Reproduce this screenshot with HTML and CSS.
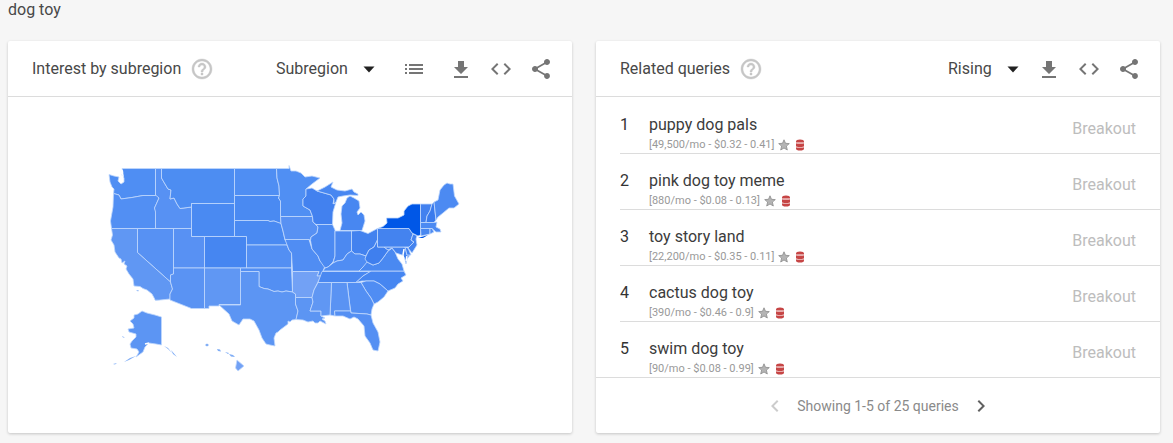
FILE: index.html
```html
<!DOCTYPE html>
<html lang="en">
<head>
<meta charset="utf-8">
<title>dog toy</title>
<link rel="stylesheet" href="styles.css">
</head>
<body>
<svg class="sprite" aria-hidden="true">
  <symbol id="help" viewBox="0 0 24 24"><path d="M11 18h2v-2h-2v2zm1-16C6.48 2 2 6.48 2 12s4.480 10 10 10 10-4.480 10-10S17.520 2 12 2zm0 18c-4.410 0-8-3.590-8-8s3.590-8 8-8 8 3.590 8 8-3.590 8-8 8zm0-14c-2.210 0-4 1.790-4 4h2c0-1.100.9-2 2-2s2 .9 2 2c0 2-3 1.750-3 5h2c0-2.250 3-2.500 3-5 0-2.210-1.790-4-4-4z"/></symbol>
  <symbol id="arrow" viewBox="0 0 24 24"><path d="M6.500 9.500h11L12 15.500z"/></symbol>
  <symbol id="list" viewBox="0 0 24 24"><path d="M3 7h2v2H3zM3 11h2v2H3zM3 15h2v2H3zM7 7h14v2H7zM7 11h14v2H7zM7 15h14v2H7z"/></symbol>
  <symbol id="download" viewBox="0 0 24 24"><path d="M19 10h-4V4H9v6H5l7 7 7-7zM5 19v2h14v-2z"/></symbol>
  <symbol id="embed" viewBox="0 0 24 24"><path d="M9.400 16.600L4.800 12l4.600-4.600L8 6l-6 6 6 6 1.400-1.400zm5.200 0l4.600-4.600-4.600-4.600L16 6l6 6-6 6-1.400-1.400z"/></symbol>
  <symbol id="share" viewBox="0 0 24 24"><path d="M18 16.080c-.76 0-1.440.3-1.960.77L8.910 12.700c.05-.23.09-.46.09-.7s-.04-.47-.09-.7l7.050-4.110c.54.5 1.250.81 2.040.81 1.660 0 3-1.340 3-3s-1.340-3-3-3-3 1.340-3 3c0 .24.04.47.09.7L8.040 9.810C7.500 9.310 6.790 9 6 9c-1.660 0-3 1.340-3 3s1.340 3 3 3c.79 0 1.500-.31 2.040-.81l7.120 4.160c-.05.21-.08.43-.08.65 0 1.610 1.310 2.920 2.920 2.920s2.920-1.310 2.920-2.920-1.310-2.920-2.920-2.920z"/></symbol>
  <symbol id="prev" viewBox="0 0 24 24"><path d="M15.410 7.410L14 6l-6 6 6 6 1.410-1.410L10.830 12z"/></symbol>
  <symbol id="next" viewBox="0 0 24 24"><path d="M8.590 7.410L10 6l6 6-6 6-1.410-1.410L13.170 12z"/></symbol>
  <symbol id="star" viewBox="0 0 12 12"><path fill="#b4b4b4" stroke="#8c8c8c" stroke-width=".8" d="M6 .8l1.500 3.500 3.800.3-2.900 2.500.9 3.900L6 9l-3.300 2 .9-3.900L.7 4.600l3.800-.3z"/></symbol>
  <symbol id="database" viewBox="0 0 12 12"><path fill="#c64545" d="M2 2.500Q2 .5 6 .5t4 2V3.500H2zM2 4.200q4 1 8 0V7.500q-4 1-8 0zM2 8.300q4 1 8 0V9.500q0 2-4 2t-4-2z"/><path fill="#e3a0a0" d="M2 3.200h8v1q-4 1-8 0zM2 7.500q4 1 8 0v.8q-4 1-8 0z"/></symbol>
</svg>

<h1 class="term">dog toy</h1>
<main class="widgets">
  <section class="card">
    <header class="card-header">
      <h2 class="card-title">Interest by subregion</h2>
      <button class="help" aria-label="Help"><svg class="icon"><use href="#help"/></svg></button>
      <div class="picker"><select class="picker-select" aria-label="Resolution"><option>Subregion</option></select><svg class="icon picker-arrow"><use href="#arrow"/></svg></div>
      <button class="tool tool-list" aria-label="Show as list"><svg class="icon"><use href="#list"/></svg></button>
      <button class="tool" aria-label="Download"><svg class="icon"><use href="#download"/></svg></button>
      <button class="tool" aria-label="Embed"><svg class="icon"><use href="#embed"/></svg></button>
      <button class="tool" aria-label="Share"><svg class="icon"><use href="#share"/></svg></button>
    </header>
    <div class="map-area">
      <svg class="map" viewBox="8 97 564 336" role="img" aria-label="Interest in the United States by state">
        <g class="states">
          <path fill="#4f8ef3" d="M122 168.500H155.500V195.500L143 195.500 132 197.500 121 199 119 195 113.500 193.500 114 189 112 187 110 182 109 174.500 114 176 119 177 118 181 121 184 124 182 124 178 122 175 123 172Z"/>
          <path fill="#528ff3" d="M113.500 193.500L119 195 121 199 132 197.500 143 195.500H157L159 198 154.500 208 156 212 155.500 228.500H111.500L110.500 221 113 207Z"/>
          <path fill="#5791f3" d="M155.500 168.500H161.500V178L165 184 168 189 171 190 170 199 174 198 177 204 180 208.500 191.500 207V228.500H155.500V212L154.500 208 159 198 155.500 195Z"/>
          <path fill="#4d8df2" d="M161.500 168.500H234.500V203.500H191.500V207L180 208.500 177 204 174 198 170 199 171 190 168 189 165 184 161.500 178Z"/>
          <path fill="#4a8af2" d="M191.500 203.500H234.500V236.500H191.500Z"/>
          <path fill="#5891f3" d="M173.500 228.500H191.500V236.500H204.500V268H173.500Z"/>
          <path fill="#5791f3" d="M137.500 228.500H173.500V274L170.500 275V282L137.500 252.500Z"/>
          <path fill="#6097f3" d="M111.500 228.500H137.500V252.500L170.500 282 172.500 289 170 294V299L155.500 300.500 152 294 147 290 143 288.500 140 286.500 134 286 133 279 129 274 126 269 127 266 124 264 125 261 122 263 121 259 119 258 115 252 114 245 111 240 112.500 235Z"/>
          <path fill="#5a93f3" d="M173.500 268H204.500V308.500H191.500L170 300V294L172.500 289 170.500 282V275L173.500 274Z"/>
          <path fill="#4686f1" d="M204.500 236.500H246.500V268H204.500Z"/>
          <path fill="#6097f3" d="M204.500 268H240.500V304.500H219V306H209V308.500H204.500Z"/>
          <path fill="#4f8ef3" d="M234.500 168.500H276.500L277 178 279 186 279.500 195.500H234.500Z"/>
          <path fill="#4a8af2" d="M234.500 195.500H279.500L278.500 198 280.500 201V216L281 223.500 279 223 274 221 270 221.500 268 220.500H234.500Z"/>
          <path fill="#4a8af2" d="M234.500 220.500H268L270 221.500 274 221 281 223.500 283 231 285 240 289 245H246.500V236.500H234.500Z"/>
          <path fill="#538ff3" d="M246.500 245H287L289 250 291.500 253V268H246.500Z"/>
          <path fill="#538ff3" d="M240.500 268H291.500L292.500 292 286 291 282 292 278 291 274 291.500 268 289 264 288.500 259 286.500V271.500H240.500Z"/>
          <path fill="#5c95f3" d="M240.500 271.500H259V286.500L264 288.500 268 289 274 291.500 278 291 282 292 286 291 292.500 292 295.500 294V304L298 311 296 319.500 292 320 290 322 288 321 288 324 284 327 280 330 278 332 276 333 274 338 275 346 270 345 266 344 262 338 259 330 254 321 250 319H243L239 325 232 321 229 314 219 305H240.500Z"/>
          <path fill="#508ff3" d="M276.500 168.500H289L289 165.500 291 171 296 171 301 173 305 177 312 176 320 178 312 184 306 189V196L303 199V206L310 210 312.500 216.500H280.500V201L278.500 198 279.500 195.500 279 186 277 178Z"/>
          <path fill="#5891f3" d="M280.500 216.500H312.500L313 222 318 227 317 233 311 237 310.500 240.500 309 239.500H285L283 231 281 223.500Z"/>
          <path fill="#508df3" d="M285 239.500H309L312 249 318 256 320 261 325 266 323 271 321 276H317L319 271.500H292.500L291.500 253 289 250Z"/>
          <path fill="#72a1f5" d="M292.500 271.500H319L317 276H321L318 282 314 290 312 297.500H295.500V294L292.500 292Z"/>
          <path fill="#5c95f3" d="M295.500 297.500H312L313 302 310 311H321V316L325 318 322 319 325 321 326 324 320 321 318 323 315 323 313 321 308 322 303 320 296 319.500 298 311 295.500 304Z"/>
          <path fill="#4281ef" d="M306 189L312 188 317 191 331 195 334 199 333 204 336 202 333 212 332.500 224.500H316L313 222 312.500 216.500 310 210 303 206V199L306 196Z"/>
          <path fill="#4c8af2" d="M316 224.500H332.500L335 230V256L333 262 328 267 325 268 320 261 318 256 312 249 310.500 240.500 311 237 317 233 318 227Z"/>
          <path fill="#4887f1" d="M317 191L325 187 333 182 331 187 337 190 345 191 352 189 354 192 358 194 358 195.500 350 195 343 196 338 197 336 202 334 204V199L331 195Z"/>
          <path fill="#4887f1" d="M350 196L354 198 359 201 360 208 357 212 358 215 361 212 364 215 365 221 362 230.500H340L342 223 341 214 342 206 345 203 347 198Z"/>
          <path fill="#4c89f1" d="M335 231H351.500V251L347 254 343 260 337 261 333 263 335 256Z"/>
          <path fill="#4382ef" d="M351.500 231L360 230.500 368 233.500 377.500 228.500V240L374 247 369 250 366 256 360 254 355 254 351.500 251Z"/>
          <path fill="#508df3" d="M351.500 251L355 254 360 254 366 256 368 262 363 267 359 271H323L325 268 328 267 333 263 337 261 343 260 347 254Z"/>
          <path fill="#4a88f1" d="M322 271.500H371L363 276 356 282.500H318Z"/>
          <path fill="#4686f1" d="M371 271H404L406 275 401 278 403 281 398 284 395 288 388 291 380 284 374 281H362L356 282.500 363 276Z"/>
          <path fill="#508df3" d="M361 282.500L366 281H374L380 284 388 291 384 297 378 302 374 304 371 298 366 291Z"/>
          <path fill="#538ff3" d="M347 282.500H361L366 291 371 298 374 304 372 309 371 315 367 314 351 313 349.500 303Z"/>
          <path fill="#5a93f3" d="M331.500 282.500H347L349.500 303 350.500 311H334.500L335 316 330 315Z"/>
          <path fill="#6097f3" d="M318 282.500H331.500L330 315 321 316V311H310L313 302 312 297.500 314 290Z"/>
          <path fill="#548ff3" d="M334.500 311H350.500L351 313 367 314 371 315 373 323 378 332 380 342 378 351 373 350 370 343 365 336 364 326 358 319 354 317 350 319 343 316 335 316Z"/>
          <path fill="#4a89f1" d="M359 271H404L402 264 398 259 395 252 392 248 388 251 383 258 379 263 373 265 367 262 363 267Z"/>
          <path fill="#3f7fee" d="M366 256L369 250 374 247 377.500 240V247H384L388 250 392 248 388 251 383 258 379 263 373 265 367 262 365 259Z"/>
          <path fill="#4382ef" d="M384 247H405L407 255H410L407 259 406 264 404 257 402 255 396 253 392 248 388 250Z"/>
          <path fill="#4584f0" d="M405 247L408 248 411 255H407Z"/>
          <path fill="#4483ef" d="M377.500 228.500H409L413 234 411 240 414 242 409 247H377.500Z"/>
          <path fill="#4483ef" d="M413 234L417 235.500 416 239 417 245 412 253 408 248 414 242 411 240Z"/>
          <path fill="#0057e7" d="M377.500 228.500L383 226.500 387 223 386.500 218H398L404 215V211L408 206 412 204H420.500V235L418 236 412 233 409 228.500Z"/>
          <path fill="#4281ef" d="M420.500 204H432L430 211 427 216 426 222.500H420.500Z"/>
          <path fill="#3a7bed" d="M432 204L434 202 436 220 434 222.500H426L427 216 430 211Z"/>
          <path fill="#4c8af2" d="M434 202L438 200 440 190 444 185 447 183 450 184 453 184 454.500 196 459 204 454 208 449 208 443 213 438 217 436 220Z"/>
          <path fill="#4c8af2" d="M420.500 222.500H434L437 222 436 227 440 229 441 232 436 232 432 228.500H420.500Z"/>
          <path fill="#4887f1" d="M420.500 228.500H430V234L421 236Z"/>
          <path fill="#4c8af2" d="M430 228.500H432L434 232 430 234Z"/>
          <path fill="#5c95f3" d="M130 321L134 318 134 315 138 314 142 311 147 313 155 315 161.500 317V345L156 344 149 343 145 347 143 352 136 357 139 352 137 349 131 348 130 344 132 341 136 337V334L129 332 128 329 134 328 133 324Z"/>
          <path fill="#72a1f5" d="M237 360L244 366 238 371 235.500 368Z"/>
        </g>
        <path class="island-main" d="M418 238L428 235 423 238Z"/>
        <path class="islands" d="M205 345l2-1.500 2 1.500-2 1.500zM217 349l3 .5 1 2-3-.5zM225 352l4 1-1 1zM229 354l4 1 2 2-4-.5zM122 336l3 1.500-2 0zM164 346l4 2 4 5-4-4zM171 350l6 7-4-3zM136 356l-7 4-5 2 6-4zM113 364l4-1-2 1.500zM136 290l3 .5-1 1zM154 299l5 0-2 1z"/>
        <path class="water" d="M122 170l1 6-2 5M149 343l-4 1M404 249l-1 6 1 7M407 256l-1 5"/>
      </svg>
    </div>
  </section>

  <section class="card">
    <header class="card-header">
      <h2 class="card-title">Related queries</h2>
      <button class="help" aria-label="Help"><svg class="icon"><use href="#help"/></svg></button>
      <div class="picker"><select class="picker-select" aria-label="Sort"><option>Rising</option></select><svg class="icon picker-arrow"><use href="#arrow"/></svg></div>
      <button class="tool" aria-label="Download"><svg class="icon"><use href="#download"/></svg></button>
      <button class="tool" aria-label="Embed"><svg class="icon"><use href="#embed"/></svg></button>
      <button class="tool" aria-label="Share"><svg class="icon"><use href="#share"/></svg></button>
    </header>
    <ol class="queries">
      <li class="query"><span class="rank">1</span><div class="query-text"><a class="query-name" href="#">puppy dog pals</a><div class="metrics"><span>[49,500/mo - $0.32 - 0.41]</span><button class="mini" aria-label="Favorite"><svg class="mini-icon"><use href="#star"/></svg></button><button class="mini" aria-label="Database"><svg class="mini-icon"><use href="#database"/></svg></button></div></div><span class="change">Breakout</span></li>
      <li class="query"><span class="rank">2</span><div class="query-text"><a class="query-name" href="#">pink dog toy meme</a><div class="metrics"><span>[880/mo - $0.08 - 0.13]</span><button class="mini" aria-label="Favorite"><svg class="mini-icon"><use href="#star"/></svg></button><button class="mini" aria-label="Database"><svg class="mini-icon"><use href="#database"/></svg></button></div></div><span class="change">Breakout</span></li>
      <li class="query"><span class="rank">3</span><div class="query-text"><a class="query-name" href="#">toy story land</a><div class="metrics"><span>[22,200/mo - $0.35 - 0.11]</span><button class="mini" aria-label="Favorite"><svg class="mini-icon"><use href="#star"/></svg></button><button class="mini" aria-label="Database"><svg class="mini-icon"><use href="#database"/></svg></button></div></div><span class="change">Breakout</span></li>
      <li class="query"><span class="rank">4</span><div class="query-text"><a class="query-name" href="#">cactus dog toy</a><div class="metrics"><span>[390/mo - $0.46 - 0.9]</span><button class="mini" aria-label="Favorite"><svg class="mini-icon"><use href="#star"/></svg></button><button class="mini" aria-label="Database"><svg class="mini-icon"><use href="#database"/></svg></button></div></div><span class="change">Breakout</span></li>
      <li class="query"><span class="rank">5</span><div class="query-text"><a class="query-name" href="#">swim dog toy</a><div class="metrics"><span>[90/mo - $0.08 - 0.99]</span><button class="mini" aria-label="Favorite"><svg class="mini-icon"><use href="#star"/></svg></button><button class="mini" aria-label="Database"><svg class="mini-icon"><use href="#database"/></svg></button></div></div><span class="change">Breakout</span></li>
    </ol>
    <footer class="pager">
      <button class="page page-prev" aria-label="Previous" disabled><svg class="page-icon"><use href="#prev"/></svg></button>
      <span>Showing 1-5 of 25 queries</span>
      <button class="page" aria-label="Next"><svg class="page-icon"><use href="#next"/></svg></button>
    </footer>
  </section>
</main>
</body>
</html>
```
FILE: styles.css
```css
* {
  box-sizing: border-box;
}

body {
  margin: 0;
  padding: 0 13px 10px 8px;
  background: #f6f6f6;
  color: #484848;
  font: 16px/20px Roboto, Arial, sans-serif;
}

button {
  display: flex;
  align-items: center;
  justify-content: center;
  padding: 0;
  border: 0;
  background: none;
  color: inherit;
  cursor: pointer;
}

.sprite {
  display: none;
}

.term {
  margin: 0 0 21px;
  font-size: 16px;
  font-weight: 400;
}

.widgets {
  display: grid;
  grid-template-columns: 1fr 1fr;
  gap: 24px;
}

.card {
  display: flex;
  flex-direction: column;
  min-width: 0;
  border-radius: 2px;
  background: #fff;
  box-shadow: 0 1px 3px rgba(0, 0, 0, .2);
}

.card-header {
  display: flex;
  align-items: center;
  height: 56px;
  padding: 0 11px 0 24px;
  border-bottom: 1px solid #dcdcdc;
}

.card-title {
  margin: 0;
  font-size: 16px;
  font-weight: 400;
  white-space: nowrap;
}

.icon {
  display: block;
  width: 24px;
  height: 24px;
  fill: currentColor;
}

.help {
  margin: 0 auto 0 9px;
  color: #c6c6c6;
  stroke: currentColor;
  stroke-width: .4;
}

.picker {
  display: grid;
  align-items: center;
}

.picker-select {
  grid-area: 1 / 1;
  appearance: none;
  padding: 0 37px 0 0;
  border: 0;
  background: none;
  color: #484848;
  font: inherit;
}

.picker-arrow {
  grid-area: 1 / 1;
  justify-self: end;
  margin-right: 4px;
  color: #212121;
  pointer-events: none;
}

.tool {
  width: 40px;
  height: 40px;
  color: #757575;
}

.tool-list {
  margin: 0 7px 0 9px;
}

.map-area {
  flex: 1;
  display: flex;
  align-items: center;
}

.map {
  display: block;
  width: 100%;
}

.states {
  stroke: #c0d8fc;
  stroke-width: .8;
  stroke-linejoin: round;
}

.island-main {
  fill: #0057e7;
}

.islands {
  fill: #7fadf6;
}

.water {
  fill: none;
  stroke: #fff;
  stroke-width: 1.5;
}

.queries {
  margin: 0;
  padding: 1px 0 0;
  list-style: none;
}

.query {
  display: flex;
  align-items: flex-start;
  height: 56px;
  margin-left: 24px;
  padding: 17px 24px 0 0;
  border-bottom: 1px solid #dcdcdc;
}

.query:last-child {
  margin-left: 0;
  padding-left: 24px;
}

.rank {
  width: 29px;
  color: #333;
}

.query-text {
  flex: 1;
}

.query-name {
  display: block;
  color: #3c3c3c;
  text-decoration: none;
}

.metrics {
  display: flex;
  align-items: center;
  gap: 4px;
  height: 20px;
  color: #999;
  font-size: 11px;
}

.mini-icon {
  display: block;
  width: 12px;
  height: 12px;
}

.change {
  margin-top: 4px;
  color: #bdbdbd;
}

.pager {
  display: flex;
  align-items: center;
  justify-content: center;
  gap: 10px;
  height: 55px;
  color: #8a8a8a;
  font-size: 14px;
}

.page {
  color: #616161;
}

.page-prev {
  color: #ccc;
}

.page-icon {
  display: block;
  width: 24px;
  height: 24px;
  fill: currentColor;
}
```
